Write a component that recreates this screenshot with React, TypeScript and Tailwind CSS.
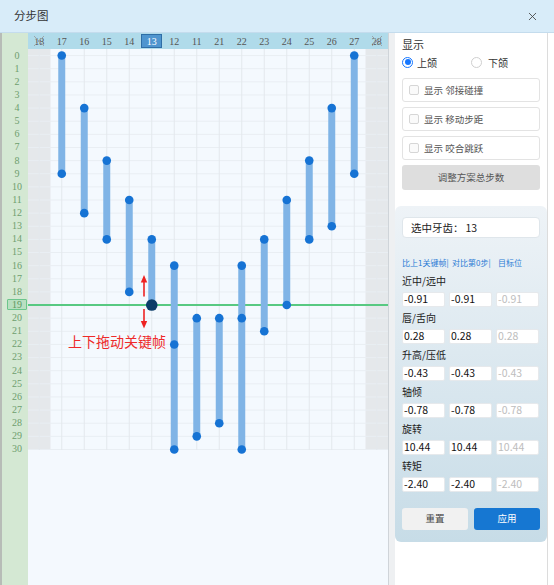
import { X } from "lucide-react";

const COLS = ["18", "17", "16", "15", "14", "13", "12", "11", "21", "22", "23", "24", "25", "26", "27", "28"];
const CW = 22.5;
const RH = 13.13;
const Y0 = 6.57;
const cx = (i: number) => CW * i + CW / 2;
const ry = (r: number) => Y0 + RH * r;

const BARS: { c: number; a: number; b: number; m?: number[] }[] = [
  { c: 1, a: 0, b: 9 },
  { c: 2, a: 4, b: 12 },
  { c: 3, a: 8, b: 14 },
  { c: 4, a: 11, b: 18 },
  { c: 5, a: 14, b: 19 },
  { c: 6, a: 16, b: 30, m: [22] },
  { c: 7, a: 20, b: 29 },
  { c: 8, a: 20, b: 28 },
  { c: 9, a: 16, b: 30, m: [20] },
  { c: 10, a: 14, b: 21 },
  { c: 11, a: 11, b: 19 },
  { c: 12, a: 8, b: 14 },
  { c: 13, a: 4, b: 13 },
  { c: 14, a: 0, b: 9 },
];

const PARAMS = [
  { label: "近中/远中", v: "-0.91" },
  { label: "唇/舌向", v: "0.28" },
  { label: "升高/压低", v: "-0.43" },
  { label: "轴倾", v: "-0.78" },
  { label: "旋转", v: "10.44" },
  { label: "转矩", v: "-2.40" },
];

const CHECKS = ["显示 邻接碰撞", "显示 移动步距", "显示 咬合跳跃"];

function StepChart() {
  const rows = Array.from({ length: 31 }, (_, i) => i);
  return (
    <svg width="360" height="401" className="overflow-visible block">
      <rect x="0" y="0" width={CW} height="401" fill="#e5e8eb" />
      <rect x={CW * 15} y="0" width={CW} height="401" fill="#e5e8eb" />
      {rows.map((r) => (
        <line key={r} x1="0" x2="360" y1={ry(r)} y2={ry(r)} stroke="#e9eef3" strokeWidth="1" />
      ))}
      {COLS.map((_, i) => (
        <line key={i} x1={cx(i)} x2={cx(i)} y1="0" y2="401" stroke="#e3e8ed" strokeWidth="1" />
      ))}
      <line x1="0" x2="362" y1={ry(19)} y2={ry(19)} stroke="#58c982" strokeWidth="2" />
      {BARS.map((b) => (
        <g key={b.c}>
          <line x1={cx(b.c)} x2={cx(b.c)} y1={ry(b.a)} y2={ry(b.b)} stroke="#80b4e6" strokeWidth="7" />
          <circle cx={cx(b.c)} cy={ry(b.a)} r="4.3" fill="#1673d4" />
          {b.m?.map((m) => (
            <circle key={m} cx={cx(b.c)} cy={ry(m)} r="4.3" fill="#1673d4" />
          ))}
          {b.c === 5 ? (
            <circle cx={cx(b.c)} cy={ry(b.b)} r="5.8" fill="#0d3d69" />
          ) : (
            <circle cx={cx(b.c)} cy={ry(b.b)} r="4.3" fill="#1673d4" />
          )}
        </g>
      ))}
      {/* drag hint */}
      <line x1="116" x2="116" y1="232" y2="247.5" stroke="#ee2222" strokeWidth="1.6" />
      <polygon points="116,226 112.8,233.5 119.2,233.5" fill="#ee2222" />
      <line x1="116" x2="116" y1="260" y2="273" stroke="#ee2222" strokeWidth="1.6" />
      <polygon points="116,279.5 112.8,272 119.2,272" fill="#ee2222" />
      <text x="40" y="297.5" fill="#ee2a2a" fontSize="14" className="font-['Noto_Sans_CJK_SC',sans-serif]">
        上下拖动关键帧
      </text>
    </svg>
  );
}

export default function App() {
  const rows = Array.from({ length: 31 }, (_, i) => i);
  return (
    <div className="w-[554px] h-[585px] overflow-hidden flex flex-col bg-white font-['Noto_Sans_CJK_SC',sans-serif] text-[#333]">
      {/* title bar */}
      <div className="h-[33px] shrink-0 bg-[#d8ecf9] flex items-center justify-between pl-[14px] pr-[15px] border-b border-[#c4dced]">
        <span className="text-[11.5px] text-[#333]">分步图</span>
        <X className="w-[13px] h-[13px] text-[#444]" strokeWidth={1.6} />
      </div>

      <div className="flex flex-1 min-h-0">
        {/* chart side */}
        <div className="flex w-[388px] shrink-0">
          <div className="w-[28px] border-l-2 border-[#b7bcb7] bg-[#d4e8d3] pl-[4px] flex flex-col">
            <div className="h-[16px] shrink-0" />
            {rows.map((r) => (
              <div key={r} className="h-[13.13px] shrink-0 flex items-center justify-center">
                {r === 19 ? (
                  <span className="w-[20px] h-[11px] flex items-center justify-center rounded-[1px] border border-[#6cc58c] bg-[#b9dfc1] text-[10px] leading-none text-[#5f975f] font-['Liberation_Serif',serif]">
                    19
                  </span>
                ) : (
                  <span className="text-[10px] leading-none text-[#6e9e6e] font-['Liberation_Serif',serif]">{r}</span>
                )}
              </div>
            ))}
          </div>
          <div className="w-[360px] bg-[#f4f9fe] flex flex-col">
            <div className="h-[16px] shrink-0 bg-[#b0dbea] flex font-['Liberation_Serif',serif]">
              {COLS.map((c, i) => (
                <div key={c} className="w-[22.5px] shrink-0 relative flex items-center justify-center">
                  {i === 5 ? (
                    <span className="w-[21px] h-[14px] flex items-center justify-center bg-[#4f95cf] border border-[#2f6ea6] text-[10px] text-white">
                      {c}
                    </span>
                  ) : (
                    <span className="text-[10px] text-[#555]">{c}</span>
                  )}
                  {(i === 0 || i === 15) && (
                    <svg className="absolute left-[5px] top-[2px]" width="12" height="12" viewBox="0 0 12 12">
                      <path d="M1 1L11 11M11 1L1 11" stroke="#9aa4aa" strokeWidth="1" />
                    </svg>
                  )}
                </div>
              ))}
            </div>
            <StepChart />
          </div>
        </div>

        {/* side panel */}
        <div className="flex-1 flex border-l border-[#cfd4d9] bg-[#eef0f2] pl-[6px]">
          <div className="w-[152px] bg-white flex flex-col px-[7px]">
            <div className="pt-[4px] text-[11px] leading-[14px] text-[#333]">显示</div>
            <div className="mt-[4px] h-[14px] flex items-center text-[10px] text-[#333]">
              <div className="w-[69px] flex items-center gap-[4px]">
                <span className="w-[11px] h-[11px] rounded-full border border-[#1677ff] flex items-center justify-center">
                  <span className="w-[6px] h-[6px] rounded-full bg-[#1677ff]" />
                </span>
                <span>上颌</span>
              </div>
              <div className="flex items-center gap-[6px]">
                <span className="w-[11px] h-[11px] rounded-full border border-[#cfcfcf] bg-white" />
                <span>下颌</span>
              </div>
            </div>
            <div className="mt-[9px] flex flex-col gap-[5px]">
              {CHECKS.map((t) => (
                <div key={t} className="h-[24px] rounded-[3px] border border-[#e3e3e3] flex items-center pl-[6px] gap-[5px]">
                  <span className="w-[10px] h-[10px] rounded-[2px] border border-[#d6d6d6] bg-[#fafafa]" />
                  <span className="text-[9.5px] text-[#555]">{t}</span>
                </div>
              ))}
              <div className="h-[25px] rounded-[3px] bg-[#dedede] flex items-center justify-center text-[9.5px] text-[#555]">
                调整方案总步数
              </div>
            </div>

            {/* selected tooth card */}
            <div className="mt-[16px] -mx-[7px] rounded-[6px] bg-gradient-to-b from-[#eef3f7] to-[#c7dce7] px-[7px] pt-[11px] pb-[12px]">
              <div className="h-[21px] rounded-[4px] bg-white border border-[#dfe6eb] flex items-center pl-[8px] text-[10.5px] text-[#222]">
                <span>选中牙齿：</span>
                <span className="ml-[2px]">13</span>
              </div>
              <div className="mt-[20px] h-[10px] flex gap-[4px] text-[8px] leading-[10px] text-[#2a7bd4]">
                <span className="w-[43px] whitespace-nowrap">比上1关键帧|</span>
                <span className="w-[43px] whitespace-nowrap pl-[3px]">对比第0步|</span>
                <span className="w-[43px] whitespace-nowrap pl-[2px]">目标位</span>
              </div>
              <div className="mt-[6px] flex flex-col gap-[4.5px]">
                {PARAMS.map((p) => (
                  <div key={p.label} className="flex flex-col">
                    <div className="h-[13px] text-[10px] leading-[13px] text-[#222]">{p.label}</div>
                    <div className="mt-[4.5px] flex gap-[4px]">
                      <div className="w-[43px] h-[15px] bg-white border border-[#e6e9ec] rounded-[2px] flex items-center pl-[1px] text-[10.5px] text-[#111]">{p.v}</div>
                      <div className="w-[43px] h-[15px] bg-white border border-[#e6e9ec] rounded-[2px] flex items-center pl-[1px] text-[10.5px] text-[#111]">{p.v}</div>
                      <div className="w-[43px] h-[15px] bg-white border border-[#e6e9ec] rounded-[2px] flex items-center pl-[1px] text-[10.5px] text-[#bdbdbd]">{p.v}</div>
                    </div>
                  </div>
                ))}
              </div>
              <div className="mt-[16px] flex gap-[6px]">
                <div className="flex-1 h-[22px] rounded-[3px] bg-[#f1f1f1] flex items-center justify-center text-[9.5px] text-[#444]">重置</div>
                <div className="flex-1 h-[22px] rounded-[3px] bg-[#1677d2] flex items-center justify-center text-[9.5px] text-white">应用</div>
              </div>
            </div>
          </div>
          <div className="flex-1 bg-white border-l border-[#dcdcdc]" />
        </div>
      </div>
    </div>
  );
}
